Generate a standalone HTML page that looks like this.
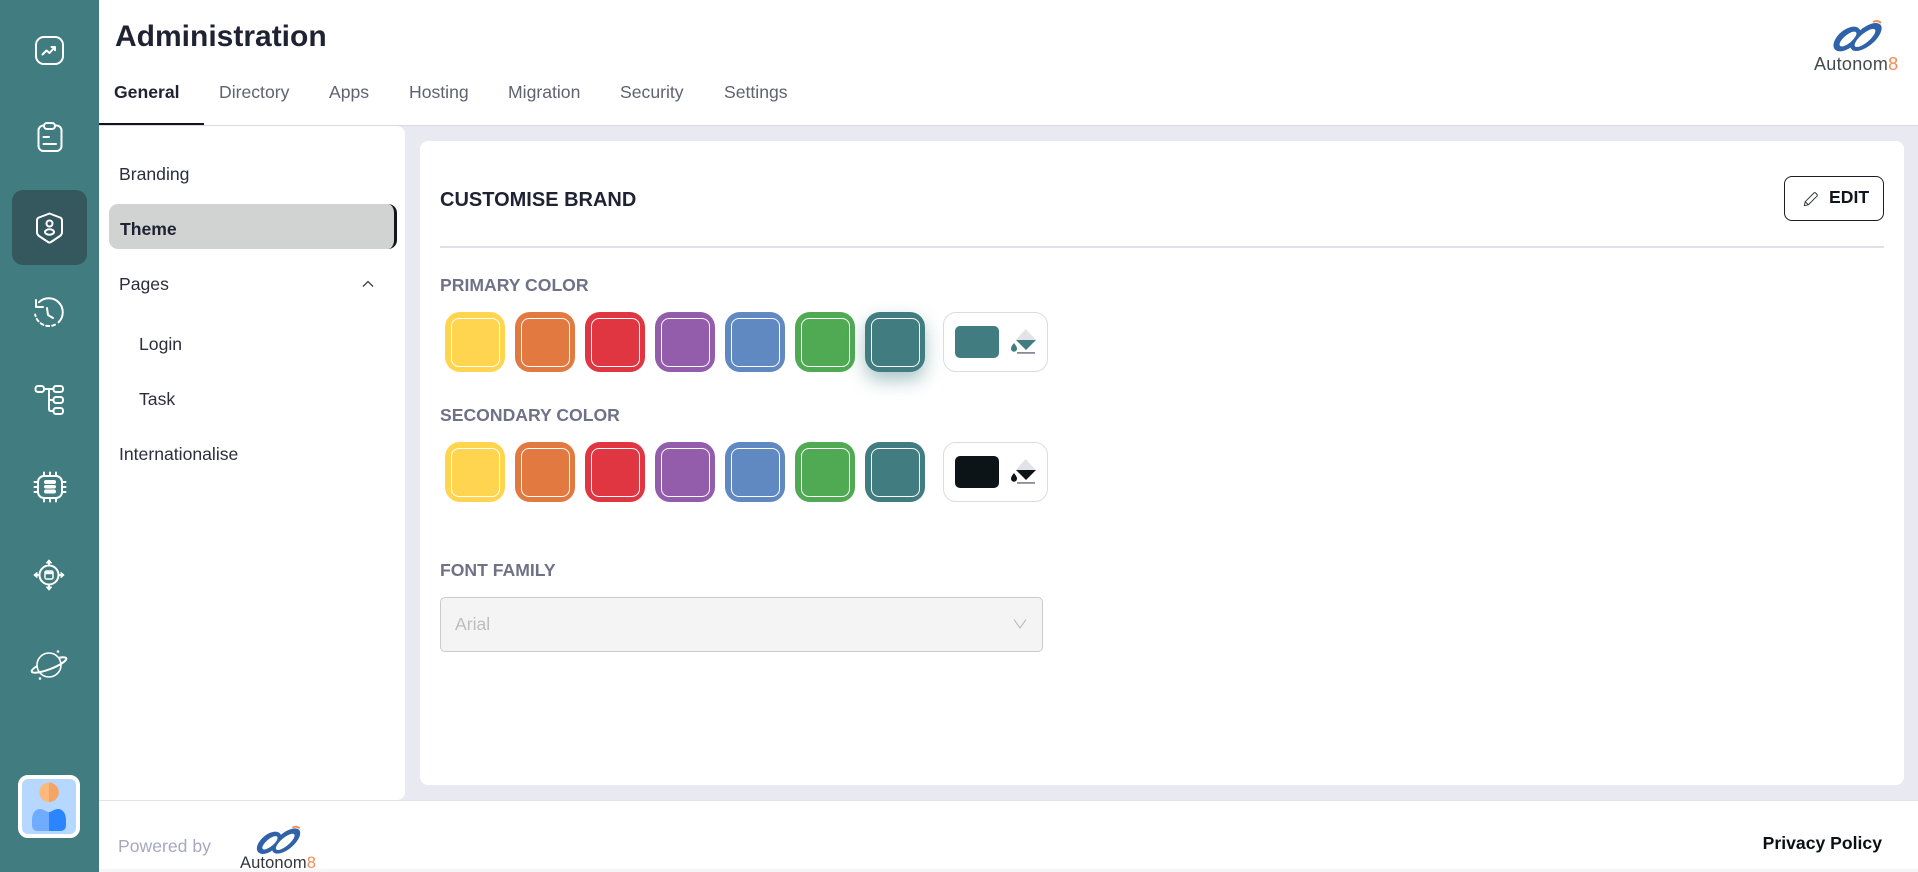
<!DOCTYPE html>
<html><head><meta charset="utf-8"><title>Administration</title>
<style>
*{box-sizing:border-box}
html,body{margin:0;padding:0}
body{width:1918px;height:872px;overflow:hidden;position:relative;background:#fff;font-family:"Liberation Sans",Arial,sans-serif;color:#1f2233}
.a{position:absolute;white-space:nowrap}
.ic{position:absolute;fill:none;stroke:#fff;stroke-width:2;stroke-linecap:round;stroke-linejoin:round}
.sw{position:absolute;width:60px;height:60px;border-radius:15px}
.sw:after{content:"";position:absolute;left:5.5px;top:5.5px;right:5.5px;bottom:5.5px;border:1.2px solid #fff;border-radius:8px}
.lab{font-size:17.6px;font-weight:bold;color:#6f7287}
.tab{font-size:17.6px;color:#5f6270;top:81px;line-height:22px}
.nav{font-size:17.6px;color:#2b2e3c;line-height:22px}
.cb{position:absolute;left:943px;width:105px;height:60px;border:1px solid #dcdcdf;border-radius:13px;background:#fff}
.cb i{position:absolute;left:11px;top:13px;width:44px;height:32px;border-radius:5px}
.cb svg{position:absolute;left:66px;top:15px}
</style></head>
<body>
<div class="a" style="left:99px;top:126px;width:1819px;height:675px;background:#e9eaf1"></div>
<div class="a" style="left:0;top:0;width:99px;height:872px;background:#417c80"></div>
<div class="a" style="left:12px;top:190px;width:75px;height:75px;border-radius:11px;background:#35585f"></div>

<svg class="ic" style="left:33px;top:34px" width="32" height="32" viewBox="0 0 32 32"><rect x="3" y="3" width="27" height="27" rx="8"/><path d="M9.500 20.500l4-4 3 2.500 5-5.500M18.500 13h3.500v3.200"/></svg>
<svg class="ic" style="left:35px;top:120px" width="30" height="34" viewBox="0 0 30 34"><path d="M9 5.500H8A5 5 0 0 0 3.500 10v16A5 5 0 0 0 8.500 31h13a5 5 0 0 0 5-5V10A5 5 0 0 0 21 5.500h-1"/><rect x="9" y="3" width="11" height="6" rx="3"/><path d="M8.500 17h5.500M8.500 24h12.500"/></svg>
<svg class="ic" style="left:34px;top:211px" width="30" height="34" viewBox="0 0 30 34"><path d="M15.500 2.500L26 6.500Q28 7.200 28 9.500V21Q28 23.500 26 25L17 31Q15.500 32 14 31L5 25Q3 23.500 3 21V9.500Q3 7.200 5 6.500Z"/><circle cx="15.500" cy="12.500" r="3"/><ellipse cx="15.500" cy="21" rx="4.500" ry="2.700"/></svg>
<svg class="ic" style="left:33px;top:295px" width="32" height="34" viewBox="0 0 32 34"><path d="M6 7.200A14 14 0 1 1 25.500 27.300"/><path d="M3 5v7h7"/><path d="M22 29.700A14 14 0 0 1 2.200 19.500" stroke-dasharray="3 3"/><path d="M14 13l1 7 5 3"/></svg>
<svg class="ic" style="left:33px;top:383px" width="32" height="34" viewBox="0 0 32 34"><rect x="2.500" y="3" width="8.500" height="6" rx="2.500"/><rect x="20.500" y="3" width="9.500" height="6" rx="2.500"/><rect x="20.500" y="14" width="9.500" height="6" rx="2.500"/><rect x="20.500" y="25" width="9.500" height="6" rx="2.500"/><path d="M11 6h9.500M16 6v20c0 1.500 1 2 2 2h2.500M16 17h4.500"/></svg>
<svg class="ic" style="left:33px;top:471px" width="34" height="32" viewBox="0 0 34 32"><rect x="5" y="5" width="24" height="22" rx="6"/><path d="M11 1.500V5M17 1.500V5M23 1.500V5M11 27v3.500M17 27v3.500M23 27v3.500M1.500 11H5M1.500 16H5M1.500 21H5M29 11h3.500M29 16h3.500M29 21h3.500"/><g fill="#fff" stroke="none"><rect x="11" y="9" width="12" height="4" rx="2"/><rect x="11" y="14" width="12" height="3.500" rx="1.700"/><rect x="11" y="18.500" width="12" height="4" rx="2"/></g></svg>
<svg class="ic" style="left:33px;top:559px" width="32" height="32" viewBox="0 0 32 32"><circle cx="16" cy="16" r="9.500"/><rect x="12" y="12" width="8" height="8" rx="1.500" stroke-width="1.500"/><path d="M12 14h8" stroke-width="2.500" stroke-linecap="butt"/><path d="M16 2v4.500M16 25.500V30M2 16h4.500M25.500 16H30"/><path d="M13.500 4L16 1l2.500 3zM13.500 28L16 31l2.500-3zM4 13.500L1 16l3 2.500zM28 13.500L31 16l-3 2.500z" fill="#fff" stroke-width="1"/></svg>
<svg class="ic" style="left:29px;top:649px" width="40" height="32" viewBox="0 0 40 32"><circle cx="20" cy="16" r="12" stroke-width="1.600"/><g transform="rotate(-21 20 16)"><path d="M32 12.800A18.500 4.200 0 1 1 8 12.800" stroke-width="2"/></g><circle cx="29" cy="2.500" r=".8" fill="#fff" stroke-width="1"/><circle cx="11" cy="29.500" r=".8" fill="#fff" stroke-width="1"/></svg>

<div class="a" style="left:18px;top:775px;width:62px;height:63px;border:4px solid #fff;border-radius:10px;background:#b6d7ff"></div>
<svg class="a" style="left:30px;top:780px" width="38" height="54" viewBox="0 0 38 54"><path d="M19 2.500a9.800 9.800 0 0 0 0 19.600z" fill="#fdb97d"/><path d="M19 2.500a9.800 9.800 0 0 1 0 19.600z" fill="#f4a565"/><path d="M19 32c-3 0-5-3-9-3-5 0-8 5-8 11v5c0 4 2 6 6 6h11z" fill="#6fabff"/><path d="M19 32c3 0 5-3 9-3 5 0 8 5 8 11v5c0 4-2 6-6 6H19z" fill="#2a85ff"/></svg>

<div class="a" style="left:115px;top:19px;font-size:30px;font-weight:bold;line-height:36px;color:#1f2233">Administration</div>
<div class="a tab" style="left:114px;font-weight:bold;color:#1f2233">General</div>
<div class="a tab" style="left:219px">Directory</div>
<div class="a tab" style="left:329px">Apps</div>
<div class="a tab" style="left:409px">Hosting</div>
<div class="a tab" style="left:508px">Migration</div>
<div class="a tab" style="left:620px">Security</div>
<div class="a tab" style="left:724px">Settings</div>
<div class="a" style="left:99px;top:125px;width:1819px;height:1px;background:#d9d9e3"></div>
<div class="a" style="left:99px;top:123px;width:105px;height:2px;background:#10161c"></div>

<svg class="a" style="left:1825px;top:17px" width="65" height="40" viewBox="0 0 65 40"><g fill="#2f62a8"><ellipse cx="22" cy="22" rx="16" ry="9" transform="rotate(-40 22 22)"/><ellipse cx="41" cy="20" rx="19" ry="9" transform="rotate(-40 41 20)"/></g><g fill="#fff"><ellipse cx="23" cy="22" rx="10.500" ry="4" transform="rotate(-40 23 22)"/><ellipse cx="40" cy="21" rx="13" ry="4.500" transform="rotate(-40 40 21)"/></g><path d="M48 5c3-1.500 6-1 8 1" fill="none" stroke="#f08a4b" stroke-width="1.800"/></svg>
<div class="a" style="left:1814px;top:54px;font-size:18px;line-height:21px;color:#46494e;letter-spacing:.3px">Autonom<span style="color:#f58b55">8</span></div>

<div class="a" style="left:99px;top:126px;width:306px;height:674px;background:#fff;border-radius:0 8px 8px 0"></div>
<div class="a nav" style="left:119px;top:163px">Branding</div>
<div class="a" style="left:109px;top:204px;width:288px;height:45px;background:#d1d3d3;border-radius:9px;border-right:3px solid #10161c"></div>
<div class="a nav" style="left:120px;top:218px;font-weight:bold;color:#1f2233">Theme</div>
<div class="a nav" style="left:119px;top:273px">Pages</div>
<svg class="a" style="left:362px;top:280px" width="12" height="8" viewBox="0 0 12 8"><path d="M1 6.500l5-5 5 5" fill="none" stroke="#3a3d48" stroke-width="1.300"/></svg>
<div class="a nav" style="left:139px;top:333px">Login</div>
<div class="a nav" style="left:139px;top:388px">Task</div>
<div class="a nav" style="left:119px;top:443px">Internationalise</div>

<div class="a" style="left:420px;top:141px;width:1484px;height:644px;background:#fff;border-radius:8px"></div>
<div class="a" style="left:440px;top:189px;font-size:20px;font-weight:bold;line-height:22px;color:#1f2233">CUSTOMISE BRAND</div>
<div class="a" style="left:1784px;top:176px;width:100px;height:45px;border:1.300px solid #1a1d22;border-radius:8px;background:#fff"></div>
<svg class="a" style="left:1803px;top:191px" width="16" height="16" viewBox="0 0 18 18"><path d="M1.500 16.500l1-4.500L12 2.500c.8-.8 1.700-.8 2.500 0l1 1c.8.800.8 1.700 0 2.500L6 15.500zM2.500 12l3.500 3.500" fill="none" stroke="#33363c" stroke-width="1.100" stroke-linejoin="round"/></svg>
<div class="a" style="left:1829px;top:187px;font-size:17.600px;font-weight:bold;line-height:20px;color:#10161c">EDIT</div>
<div class="a" style="left:440px;top:246px;width:1444px;height:2px;background:#e0e0e7"></div>

<div class="a lab" style="left:440px;top:276px;line-height:18px">PRIMARY COLOR</div>
<div class="sw" style="left:445px;top:312px;background:#ffd54f"></div>
<div class="sw" style="left:515px;top:312px;background:#e17940"></div>
<div class="sw" style="left:585px;top:312px;background:#e03642"></div>
<div class="sw" style="left:655px;top:312px;background:#945dab"></div>
<div class="sw" style="left:725px;top:312px;background:#6088c1"></div>
<div class="sw" style="left:795px;top:312px;background:#50aa54"></div>
<div class="sw" style="left:865px;top:312px;background:#417c80;box-shadow:0 8px 18px rgba(65,124,128,.45)"></div>
<div class="cb" style="top:312px"><i style="background:#417c80"></i>
<svg width="28" height="28" viewBox="0 0 28 28"><path d="M15.500 1L6 12h20z" fill="#e2e2e8"/><path d="M6 12h20l-10 10z" fill="#417c80"/><path d="M4 15c1.500 2 3 3.800 3 5.800a3 3 0 0 1-6 0C1 18.800 2.500 17 4 15z" fill="#417c80"/><rect x="7" y="24" width="18" height="1.800" fill="#8a8c9c"/></svg></div>

<div class="a lab" style="left:440px;top:406px;line-height:18px">SECONDARY COLOR</div>
<div class="sw" style="left:445px;top:442px;background:#ffd54f"></div>
<div class="sw" style="left:515px;top:442px;background:#e17940"></div>
<div class="sw" style="left:585px;top:442px;background:#e03642"></div>
<div class="sw" style="left:655px;top:442px;background:#945dab"></div>
<div class="sw" style="left:725px;top:442px;background:#6088c1"></div>
<div class="sw" style="left:795px;top:442px;background:#50aa54"></div>
<div class="sw" style="left:865px;top:442px;background:#417c80"></div>
<div class="cb" style="top:442px"><i style="background:#0c1418"></i>
<svg width="28" height="28" viewBox="0 0 28 28"><path d="M15.500 1L6 12h20z" fill="#e2e2e8"/><path d="M6 12h20l-10 10z" fill="#0c1418"/><path d="M4 15c1.500 2 3 3.800 3 5.800a3 3 0 0 1-6 0C1 18.800 2.500 17 4 15z" fill="#0c1418"/><rect x="7" y="24" width="18" height="1.800" fill="#8a8c9c"/></svg></div>

<div class="a lab" style="left:440px;top:561px;line-height:18px">FONT FAMILY</div>
<div class="a" style="left:440px;top:597px;width:603px;height:55px;background:#f4f4f4;border:1px solid #cbcbcb;border-radius:5px"></div>
<div class="a" style="left:455px;top:612.500px;font-size:17.6px;line-height:22px;color:#bdbdbd">Arial</div>
<svg class="a" style="left:1013px;top:618px" width="14" height="12" viewBox="0 0 14 12"><path d="M1 1.500l6 8.500 6-8.500" fill="none" stroke="#bdbdbd" stroke-width="1.100"/></svg>

<div class="a" style="left:99px;top:800px;width:1819px;height:72px;background:#fff;border-top:1.500px solid #e3e3e6"></div>
<div class="a" style="left:99px;top:869px;width:1819px;height:3px;background:#f5f5f7"></div>
<div class="a" style="left:118px;top:834.500px;font-size:17.6px;line-height:22px;color:#a6a8c0">Powered by</div>
<svg class="a" style="left:249px;top:823px" width="59" height="36" viewBox="0 0 65 40"><g fill="#2f62a8"><ellipse cx="22" cy="22" rx="16" ry="9" transform="rotate(-40 22 22)"/><ellipse cx="41" cy="20" rx="19" ry="9" transform="rotate(-40 41 20)"/></g><g fill="#fff"><ellipse cx="23" cy="22" rx="10.500" ry="4" transform="rotate(-40 23 22)"/><ellipse cx="40" cy="21" rx="13" ry="4.500" transform="rotate(-40 40 21)"/></g><path d="M48 5c3-1.500 6-1 8 1" fill="none" stroke="#f08a4b" stroke-width="1.800"/></svg>
<div class="a" style="left:240px;top:853px;height:16px;overflow:hidden;font-size:16.500px;line-height:21px;color:#33363c;letter-spacing:.1px">Autonom<span style="color:#f58b55">8</span></div>
<div class="a" style="right:36px;top:831.500px;font-size:17.6px;font-weight:bold;line-height:22px;color:#0c1014">Privacy Policy</div>
</body></html>
